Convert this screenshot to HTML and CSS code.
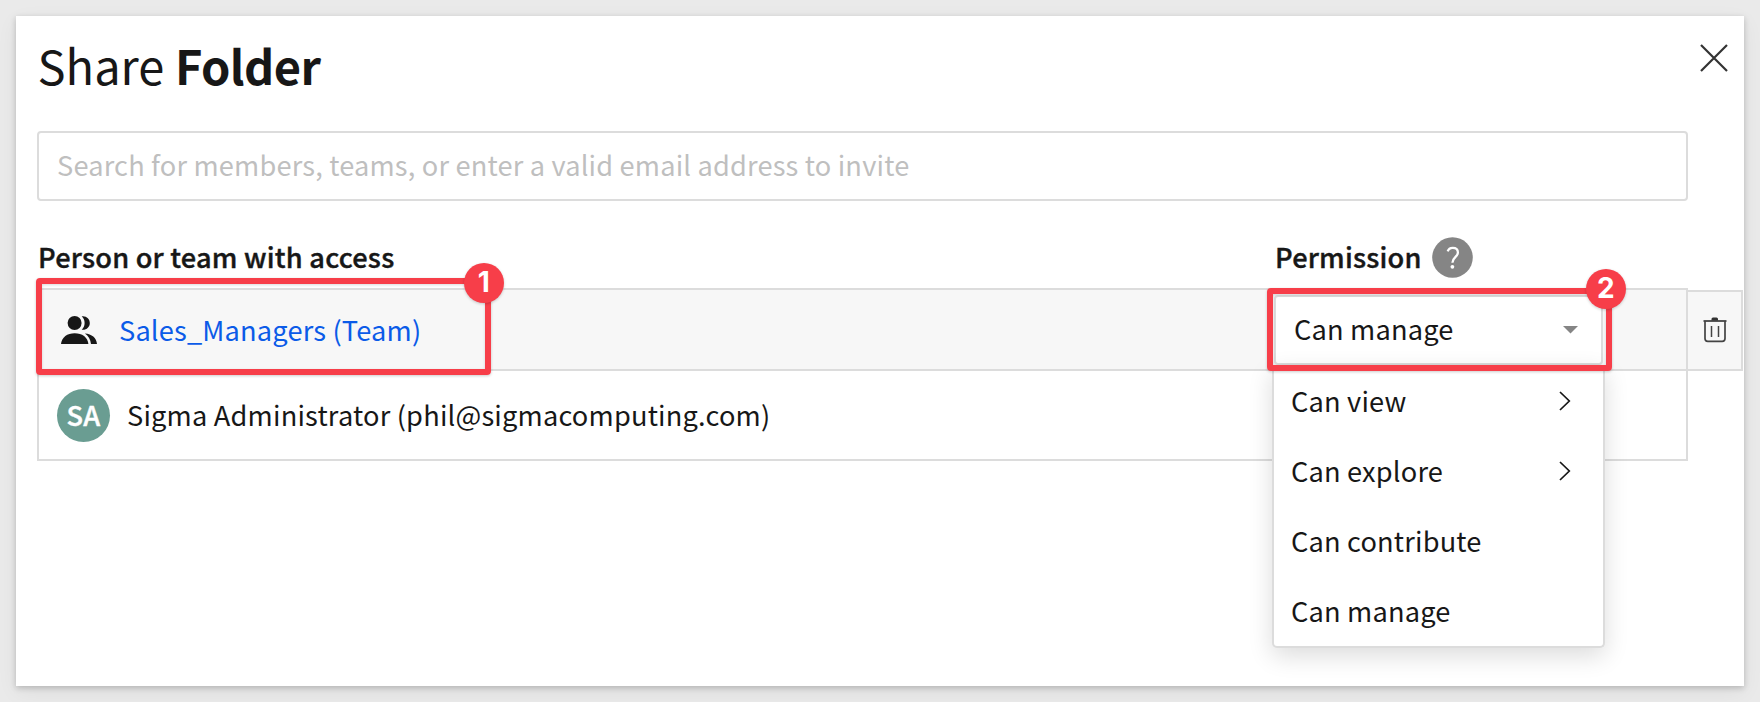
FILE: index.html
```html
<!DOCTYPE html>
<html lang="en">
<head>
<meta charset="utf-8">
<title>Share Folder</title>
<link rel="stylesheet" href="styles.css">
</head>
<body>
<main class="modal">
  <header class="modal-header">
    <h1 class="title">Share <strong class="title-strong">Folder</strong></h1>
    <button class="close" aria-label="Close">
      <svg width="30" height="30" viewBox="0 0 30 30"><path d="M2 2 28 28M28 2 2 28" fill="none" stroke="#333" stroke-width="2.2"/></svg>
    </button>
  </header>

  <div class="search">Search for members, teams, or enter a valid email address to invite</div>

  <div class="columns">
    <span class="col-person strong">Person or team with access</span>
    <span class="col-permission strong">Permission</span>
    <span class="help"><svg width="41" height="41" viewBox="0 0 41 41"><circle cx="20.5" cy="20.5" r="20.3" fill="#858585"/><path d="M15.7 14.4C16.4 12.2 18.2 10.9 20.7 10.9c3.1 0 5.2 1.8 5.2 4.5 0 4.7-5.5 4.8-5.5 10.3" fill="none" stroke="#fff" stroke-width="2.3"/><circle cx="20.4" cy="29.8" r="1.9" fill="#fff"/></svg></span>
  </div>

  <section class="table">
    <div class="row row-team">
      <svg class="team-icon" width="36" height="28" viewBox="0 0 36 28" fill="#171717">
        <circle cx="13.6" cy="7" r="7"/>
        <path d="M20.7.3C25.2-.4 28.8 2.700 28.800 7S25.200 14.400 20.700 13.700C22.600 12 23.600 9.600 23.600 7S22.600 2 20.700.3Z"/>
        <path d="M0 28C.6 21.200 6.300 17.200 13.700 17.200S26.800 21.200 27.400 28Z"/>
        <path d="M23.900 17.600C30.800 18.100 35.400 21.900 36 28H30C29.500 23.500 27.500 19.900 23.900 17.600Z"/>
      </svg>
      <a class="team-name">Sales_Managers (Team)</a>
      <div class="select">
        <span>Can manage</span>
        <svg class="caret" width="15" height="8" viewBox="0 0 15 8"><path d="M0 0H15L7.500 7.500Z" fill="#858585"/></svg>
      </div>
    </div>
    <div class="row row-user">
      <span class="avatar strong">SA</span>
      <span class="user-name">Sigma Administrator (phil@sigmacomputing.com)</span>
    </div>
    <button class="trash" aria-label="Remove">
      <svg width="24" height="26" viewBox="0 0 24 26" fill="none" stroke="#444"><path d="M.5 4H23.500" stroke-width="1.800"/><path d="M8.500 3.500V2Q8.500.5 10 .5H13.500Q15 .5 15 2V3.500Z" fill="#333" stroke="none"/><path d="M2 4V21.500Q2 24.300 4.800 24.300H19.200Q22 24.300 22 21.500V4" stroke-width="1.700"/><path d="M8.500 9V20M15.500 9V20" stroke-width="1.500"/></svg>
    </button>
  </section>

  <ul class="menu">
    <li class="item">Can view <svg class="chevron" width="12" height="20" viewBox="0 0 12 20"><path d="M1 1 10.300 10 1 19" fill="none" stroke="#171717" stroke-width="1.700"/></svg></li>
    <li class="item">Can explore <svg class="chevron" width="12" height="20" viewBox="0 0 12 20"><path d="M1 1 10.300 10 1 19" fill="none" stroke="#171717" stroke-width="1.700"/></svg></li>
    <li class="item">Can contribute</li>
    <li class="item">Can manage</li>
  </ul>

  <div class="callout callout-team"><span class="badge">1</span></div>
  <div class="callout callout-permission"><span class="badge">2</span></div>
</main>
</body>
</html>
```

FILE: styles.css
```css
* { box-sizing: border-box; }

body {
  margin: 0;
  padding: 16px;
  height: 702px;
  overflow: hidden;
  background: #eaeaea;
  color: #171717;
  font: 27.2px/38px "Noto Sans CJK SC", "Noto Sans", sans-serif;
  letter-spacing: .18px;
}

button { padding: 0; border: 0; background: none; }

.strong {
  font-weight: 500;
  letter-spacing: .22px;
  -webkit-text-stroke: .4px currentColor;
}

.modal {
  position: relative;
  height: 670px;
  padding: 21px 56px 0 21px;
  background: #fff;
  box-shadow: 0 2px 6px rgba(0, 0, 0, .2), 0 6px 20px rgba(0, 0, 0, .06);
}

.modal-header { height: 94px; }

.title {
  margin: 0;
  padding-left: .6px;
  font-size: 47px;
  line-height: 56px;
  font-weight: 400;
  letter-spacing: 0;
}

.title-strong { font-weight: 700; letter-spacing: -.55px; }

.close {
  position: absolute;
  top: 27px;
  right: 15px;
  width: 30px;
  height: 30px;
}

.close svg { display: block; }

.search {
  height: 70px;
  padding: 12px 18px;
  border: 2px solid #dcdcdc;
  border-radius: 4px;
  color: #bfbfbf;
}

.columns {
  display: flex;
  align-items: center;
  height: 41px;
  margin-top: 36px;
}

.col-person,
.col-permission { padding-bottom: 4px; }

.col-person { width: 1238px; padding-left: 1px; }
.col-permission { width: 157px; }
.help { display: flex; }

.table {
  position: relative;
  margin-top: 10px;
  border: 2px solid #dcdcdc;
}

.row { display: flex; align-items: center; }

.row-team {
  height: 81px;
  padding: 0 83px 0 22px;
  background: #f7f7f7;
  border-bottom: 2px solid #dcdcdc;
}

.team-name { margin-left: 22px; padding-bottom: 2px; color: #0b5be8; }

.select {
  display: flex;
  align-items: center;
  justify-content: space-between;
  width: 329px;
  height: 70px;
  margin-left: auto;
  padding: 0 23px 4px 18px;
  border: 2px solid #dcdcdc;
  border-radius: 4px;
  background: #fff;
}

.caret { position: relative; top: 2px; }

.row-user { height: 88px; padding-left: 18px; }

.avatar {
  width: 53px;
  height: 53px;
  border-radius: 50%;
  background: #6a9d92;
  color: #fff;
  line-height: 50px;
  text-align: center;
}

.user-name { margin-left: 17px; padding-bottom: 2px; letter-spacing: .2px; }

.trash {
  position: absolute;
  top: 0;
  left: 1647px;
  width: 57px;
  height: 81px;
  padding: 0 0 2px;
  display: flex;
  align-items: center;
  justify-content: center;
  border: 2px solid #dcdcdc;
  background: #f7f7f7;
}

.menu {
  position: absolute;
  top: 349px;
  left: 1256px;
  width: 333px;
  height: 283px;
  margin: 0;
  padding: 0;
  border: 2px solid #dcdcdc;
  border-top: 0;
  border-radius: 0 0 5px 5px;
  background: #fff;
  box-shadow: 0 8px 24px rgba(0, 0, 0, .14);
  list-style: none;
}

.item {
  display: flex;
  align-items: center;
  justify-content: space-between;
  height: 70px;
  padding: 0 32px 0 17px;
}

.chevron { position: relative; top: 1px; }

.callout {
  position: absolute;
  border: 6px solid #f73e49;
  border-radius: 4px;
  box-shadow: 0 1px 3px rgba(0, 0, 0, .2), inset 0 1px 3px rgba(0, 0, 0, .15);
}

.callout-team { top: 262px; left: 20px; width: 455px; height: 97px; }
.callout-permission { top: 271.500px; left: 1251px; width: 345px; height: 83px; }

.badge {
  position: absolute;
  top: -21.500px;
  right: -19px;
  width: 40px;
  height: 40px;
  border-radius: 50%;
  background: #f73e49;
  box-shadow: 0 1px 3px rgba(0, 0, 0, .2);
  color: #fff;
  font: 700 28px/39px Inter, sans-serif;
  text-align: center;
}

.callout-permission .badge { top: -24.500px; right: -20px; }
```
